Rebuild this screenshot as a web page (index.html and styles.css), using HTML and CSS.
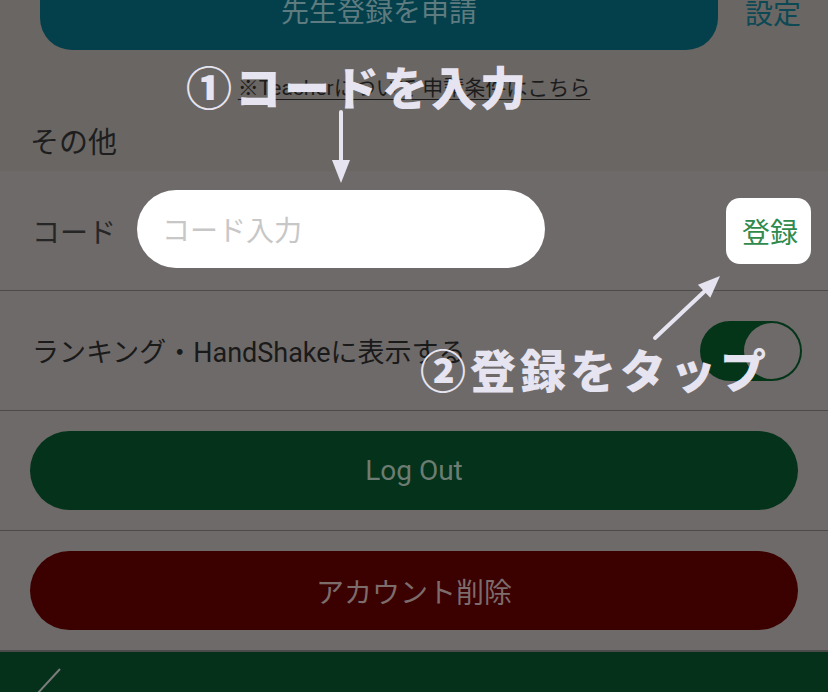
FILE: index.html
```html
<!DOCTYPE html>
<html lang="ja">
<head>
    <meta charset="UTF-8">
    <meta name="viewport" content="width=device-width, initial-scale=1.0">
    <title>設定</title>
    <link rel="stylesheet" href="styles.css">
</head>
<body>

<div class="screen">
    <div class="top">
        <div class="head">
            <div class="apply-button">先生登録を申請</div>
            <div class="page-title">設定</div>
        </div>
        <div class="teacher-link"><span>※Teacherについて 申請条件はこちら</span></div>
        <div class="section-title">その他</div>
    </div>

    <div class="list">
        <div class="row code-row">
            <span class="row-label">コード</span>
            <input type="text" class="code-input" placeholder="コード入力">
            <button class="register-button">登録</button>
        </div>
        <div class="row toggle-row">
            <span class="row-text">ランキング・HandShakeに表示する</span>
            <div class="switch"><div class="knob"></div></div>
        </div>
        <div class="row button-row">
            <button class="wide-button logout">Log Out</button>
        </div>
        <div class="row button-row">
            <button class="wide-button delete">アカウント削除</button>
        </div>
    </div>

    <div class="tabbar">
        <svg width="80" height="41" viewBox="0 0 80 41">
            <line x1="60" y1="17" x2="37" y2="42" stroke="#7c7c7c" stroke-width="2"/>
        </svg>
    </div>

    <!-- tutorial overlay -->
    <div class="note note-one">①コードを入力</div>
    <svg class="arrow arrow-down" width="24" height="76" viewBox="0 0 24 76">
        <line x1="11" y1="2" x2="11" y2="54" stroke="#e6e4f0" stroke-width="4" stroke-linecap="round"/>
        <polygon points="2,50 20,50 11,73" fill="#e6e4f0"/>
    </svg>
    <svg class="arrow arrow-up" width="90" height="82" viewBox="0 0 90 82">
        <line x1="15" y1="72" x2="67" y2="23" stroke="#e6e4f0" stroke-width="4" stroke-linecap="round"/>
        <polygon points="80,10 70.3,31.7 57.9,18.7" fill="#e6e4f0"/>
    </svg>
    <div class="note note-two">②登録をタップ</div>
</div>

</body>
</html>
```

FILE: styles.css
```css
/* settings screen, dimmed under the tutorial overlay */
body {
    margin: 0;
    background-color: #6e6a69;
    font-family: "Roboto", "Noto Sans CJK JP", sans-serif;
    overflow: hidden;
}
.screen {
    position: relative;
    width: 828px;
    height: 692px;
    overflow: hidden;
}
.top {
    height: 171px;
    background-color: #6a6664;
    box-sizing: border-box;
}
.head {
    display: flex;
    height: 50px;
    align-items: flex-start;
}
.apply-button {
    width: 678px;
    height: 80px;
    margin-top: -30px;
    margin-left: 40px;
    border-radius: 0 0 32px 32px;
    background-color: #04404b;
    color: #5e7b80;
    font-size: 28px;
    line-height: 80px;
    text-align: center;
    font-family: "Noto Sans CJK JP", sans-serif;
}
.page-title {
    margin-left: 27px;
    margin-top: -28px;
    line-height: 80px;
    font-size: 28px;
    color: #0d4954;
    font-family: "Noto Sans CJK JP", sans-serif;
}
.teacher-link {
    padding-top: 23px;
    line-height: 30px;
    text-align: center;
    font-size: 21px;
    color: #1c1c1c;
}
.teacher-link span {
    text-decoration: underline;
    text-underline-offset: 4px;
    text-decoration-thickness: 1px;
}
.section-title {
    margin-top: 17px;
    padding-left: 30px;
    line-height: 40px;
    font-size: 29px;
    color: #1e1e1e;
    font-family: "Noto Sans CJK JP", sans-serif;
}
.row {
    display: flex;
    align-items: center;
    height: 120px;
    box-sizing: border-box;
    border-bottom: 1px solid #4d4a49;
}
.code-row {
    padding: 0 17px 0 32px;
}
.row-label {
    width: 86px;
    font-size: 28px;
    color: #262626;
    font-family: "Noto Sans CJK JP", sans-serif;
}
.code-input {
    width: 408px;
    height: 78px;
    margin-left: 19px;
    margin-top: -4px;
    padding: 0 0 0 25px;
    box-sizing: border-box;
    border: none;
    border-radius: 39px;
    background-color: #ffffff;
    font-size: 28px;
    font-family: "Noto Sans CJK JP", sans-serif;
    outline: none;
}
.code-input::placeholder {
    color: #c7c7c7;
}
.register-button {
    margin-left: auto;
    width: 85px;
    height: 66px;
    border: none;
    border-radius: 14px;
    background-color: #ffffff;
    color: #2f8a4c;
    font-size: 28px;
    font-family: "Noto Sans CJK JP", sans-serif;
    padding: 0 0 0 3px;
}
.toggle-row {
    justify-content: space-between;
    padding: 0 26px 0 32px;
}
.row-text {
    font-size: 27px;
    color: #1a1a1a;
}
.switch {
    width: 102px;
    height: 60px;
    border-radius: 30px;
    background-color: #043519;
    display: flex;
    align-items: center;
    justify-content: flex-end;
    padding-right: 2px;
    box-sizing: border-box;
}
.knob {
    width: 56px;
    height: 56px;
    border-radius: 50%;
    background-color: #6e6a69;
}
.button-row {
    padding: 0 30px;
}
.wide-button {
    width: 100%;
    height: 79px;
    border: none;
    border-radius: 40px;
    font-size: 28px;
    font-family: "Roboto", "Noto Sans CJK JP", sans-serif;
}
.logout {
    background-color: #04321a;
    color: #6d7c72;
}
.delete {
    background-color: #3b0000;
    color: #7c6c6c;
}
.tabbar {
    height: 41px;
    background-color: #05301a;
    border-top: 1px solid #4a4a4a;
    box-sizing: border-box;
}
.tabbar svg {
    display: block;
}
.note {
    position: absolute;
    font-family: "Noto Sans CJK JP", sans-serif;
    font-weight: 900;
    font-size: 46px;
    line-height: 50px;
    color: #e6e4f0;
    white-space: nowrap;
}
.note-one {
    left: 186px;
    top: 60px;
    letter-spacing: 3px;
}
.note-two {
    left: 420px;
    top: 343px;
    letter-spacing: 4px;
}
.arrow {
    position: absolute;
}
.arrow-down {
    left: 330px;
    top: 110px;
}
.arrow-up {
    left: 640px;
    top: 266px;
}
```
